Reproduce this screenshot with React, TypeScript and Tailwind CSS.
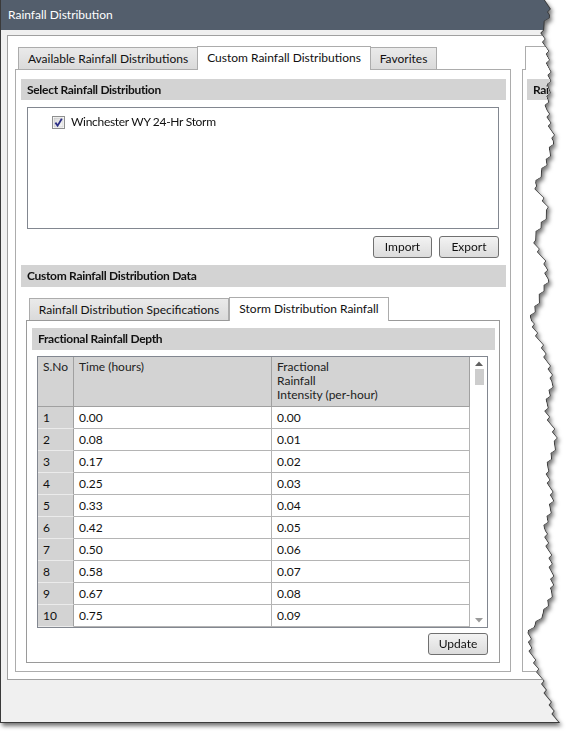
import React from 'react';

// right-hand torn edge of the screenshot, [y, x]
const EDGE: [number, number][] = [
  [0, 546], [15, 549], [30, 541], [55, 547], [80, 549], [110, 546], [140, 553], [165, 545],
  [185, 534], [210, 548], [240, 533], [265, 545], [280, 547], [300, 538], [320, 530],
  [350, 543], [380, 552], [410, 545], [440, 556], [470, 546], [500, 552], [530, 544],
  [560, 550], [590, 552], [610, 545], [633, 528], [650, 530], [660, 533], [677, 540],
  [700, 548], [723, 557],
];

function edgeAt(y: number) {
  for (let i = 0; i < EDGE.length - 1; i++) {
    const [y0, x0] = EDGE[i];
    const [y1, x1] = EDGE[i + 1];
    if (y >= y0 && y <= y1) return x0 + ((x1 - x0) * (y - y0)) / (y1 - y0);
  }
  return EDGE[EDGE.length - 1][1];
}

function tornPolygon(shift: number) {
  const pts: string[] = ['0px 0px'];
  for (let y = 0, i = 0; y <= 723; y += 3, i++) {
    const noise = (((i * 37) % 7) - 3) * 0.7;
    pts.push(`${(edgeAt(y) + noise + shift).toFixed(1)}px ${y}px`);
  }
  pts.push('0px 723px');
  return `polygon(${pts.join(', ')})`;
}

const rows = [
  ['1', '0.00', '0.00'],
  ['2', '0.08', '0.01'],
  ['3', '0.17', '0.02'],
  ['4', '0.25', '0.03'],
  ['5', '0.33', '0.04'],
  ['6', '0.42', '0.05'],
  ['7', '0.50', '0.06'],
  ['8', '0.58', '0.07'],
  ['9', '0.67', '0.08'],
  ['10', '0.75', '0.09'],
];

function SectionHeader({ title, className = '' }: { title: string; className?: string }) {
  return (
    <div className={`bg-[#d3d3d3] flex items-center pl-[6px] font-bold tracking-[-0.3px] text-[#111] whitespace-nowrap overflow-hidden ${className}`}>
      {title}
    </div>
  );
}

function Button({ label, className = '' }: { label: string; className?: string }) {
  return (
    <button className={`h-[22px] border border-[#707070] rounded-[3px] bg-gradient-to-b from-[#f3f3f3] to-[#dcdcdc] text-[#111] flex items-center justify-center ${className}`}>
      {label}
    </button>
  );
}

function Tab({ label, active, className = '' }: { label: string; active?: boolean; className?: string }) {
  return active ? (
    <div className={`h-[24px] -mb-px relative z-10 bg-white border-x border-t border-[#acacac] flex items-center justify-center pb-[2px] text-[#111] ${className}`}>
      {label}
    </div>
  ) : (
    <div className={`h-[22px] bg-gradient-to-b from-[#eaeaea] to-[#dadada] border-x border-t border-[#acacac] flex items-center justify-center text-[#111] ${className}`}>
      {label}
    </div>
  );
}

function Checkbox() {
  return (
    <svg width="13" height="13" viewBox="0 0 13 13">
      <defs>
        <linearGradient id="cb" x1="0" y1="0" x2="1" y2="1">
          <stop offset="0" stopColor="#d8d8d8" />
          <stop offset="1" stopColor="#f8f8f8" />
        </linearGradient>
      </defs>
      <rect x="0.5" y="0.5" width="12" height="12" fill="#ffffff" stroke="#8e8f8f" />
      <rect x="2" y="2" width="9" height="9" fill="url(#cb)" stroke="#b8b8b8" strokeWidth="0.5" />
      <path d="M3.4 6.6 L5.6 9.6 L9.8 2.8" fill="none" stroke="#2c2f86" strokeWidth="1.8" />
    </svg>
  );
}

function DataGrid() {
  return (
    <div className="ml-[5px] mt-[6px] w-[451px] h-[272px] border border-[#828790] flex bg-white">
      <div className="w-[432px] flex flex-col">
        <div className="h-[50px] flex border-b border-[#a0a0a0] bg-[#d3d3d3] text-[#222] leading-[14px]">
          <div className="w-[36px] border-r border-[#a0a0a0] pl-[5px] pt-[3px]">S.No</div>
          <div className="w-[198px] border-r border-[#a0a0a0] pl-[5px] pt-[3px]">Time (hours)</div>
          <div className="w-[198px] border-r border-[#a0a0a0] pl-[5px] pt-[3px] flex flex-col">
            <span>Fractional</span>
            <span>Rainfall</span>
            <span>Intensity (per-hour)</span>
          </div>
        </div>
        {rows.map(([n, t, f]) => (
          <div key={n} className="h-[22px] flex text-[#111]">
            <div className="w-[36px] bg-[#d3d3d3] border-r border-b border-r-[#a0a0a0] border-b-[#ebebeb] pl-[5px] flex items-center">
              {n}
            </div>
            <div className="w-[198px] border-r border-b border-[#b4b4b4] pl-[5px] flex items-center">{t}</div>
            <div className="w-[198px] border-r border-b border-[#b4b4b4] pl-[5px] flex items-center">{f}</div>
          </div>
        ))}
      </div>
      <div className="flex-1 flex flex-col items-center pl-[1px]">
        <svg width="8" height="5" className="mt-[4px]" viewBox="0 0 8 5">
          <path d="M0 5 L4 0.5 L8 5 Z" fill="#606060" />
        </svg>
        <div className="mt-[3px] w-[9px] h-[16px] bg-[#cdcdcd]" />
        <div className="flex-1" />
        <svg width="8" height="5" className="mb-[4px]" viewBox="0 0 8 5">
          <path d="M0 0 L8 0 L4 4.5 Z" fill="#9a9a9a" />
        </svg>
      </div>
    </div>
  );
}

export default function App() {
  return (
    <div className="w-[575px] h-[737px] bg-white overflow-hidden font-['Lato',sans-serif] text-[12px]">
      <div className="relative w-[562px] h-[723px] [filter:drop-shadow(2px_3px_2px_rgba(0,0,0,0.55))]">
        {/* thin dark outline along the torn edge */}
        <div className="absolute inset-0 bg-[#3a3a3a]" style={{ clipPath: tornPolygon(1) }} />
        <div
          className="relative w-[562px] h-[723px] flex flex-col border-l border-b border-[#3a3a3a] overflow-hidden"
          style={{ clipPath: tornPolygon(0) }}
        >
          {/* Title bar */}
          <div className="h-[30px] shrink-0 bg-[#535e6c] text-white flex items-center pl-[7px]">
            Rainfall Distribution
          </div>

          {/* Body */}
          <div className="flex-1 bg-[#f0f0f0] pl-[6px] pt-[5px]">
            <div className="w-[600px] h-[645px] bg-white border border-[#a0a0a0] pl-[7px] pt-[10px] flex gap-[11px]">
              {/* Main tab control */}
              <div className="w-[496px] shrink-0 flex flex-col">
                <div className="flex items-end pl-[3px]">
                  <Tab label="Available Rainfall Distributions" className="w-[180px]" />
                  <Tab label="Custom Rainfall Distributions" active className="w-[174px] -ml-px" />
                  <Tab label="Favorites" className="w-[67px] -ml-px" />
                </div>
                <div className="h-[603px] border border-[#acacac] pl-[5px] pr-[4px] pt-[9px] flex flex-col">
                  <SectionHeader title="Select Rainfall Distribution" className="h-[21px]" />
                  <div className="mt-[7px] ml-[6px] mr-[7px] h-[122px] border border-[#828790] pl-[24px] pt-[5px]">
                    <div className="flex items-center gap-[6px] text-[#111]">
                      <Checkbox />
                      <span className="tracking-[-0.3px]">Winchester WY 24-Hr Storm</span>
                    </div>
                  </div>
                  <div className="mt-[7px] mr-[7px] flex justify-end gap-[7px]">
                    <Button label="Import" className="w-[59px]" />
                    <Button label="Export" className="w-[60px]" />
                  </div>
                  <SectionHeader title="Custom Rainfall Distribution Data" className="mt-[7px] h-[22px]" />

                  {/* Inner tab control */}
                  <div className="mt-[10px] ml-[5px] w-[474px] flex flex-col">
                    <div className="flex items-end pl-[3px]">
                      <Tab label="Rainfall Distribution Specifications" className="w-[200px]" />
                      <Tab label="Storm Distribution Rainfall" active className="w-[160px]" />
                    </div>
                    <div className="h-[343px] border border-[#9a9a9a] pl-[5px] pr-[4px] pt-[7px] flex flex-col">
                      <SectionHeader title="Fractional Rainfall Depth" className="h-[22px]" />
                      <DataGrid />
                      <div className="mt-[5px] mr-[7px] flex justify-end">
                        <Button label="Update" className="w-[60px]" />
                      </div>
                    </div>
                  </div>
                </div>
              </div>

              {/* Second tab control, cut off by the torn edge */}
              <div className="w-[45px] shrink-0 flex flex-col">
                <div className="flex items-end pl-[3px]">
                  <Tab label="" active className="w-[42px]" />
                </div>
                <div className="h-[603px] border border-[#acacac] pl-[4px] pt-[9px]">
                  <SectionHeader title="Rainfall" className="h-[21px] pl-[1px]" />
                </div>
              </div>
            </div>
          </div>
        </div>
      </div>
    </div>
  );
}
